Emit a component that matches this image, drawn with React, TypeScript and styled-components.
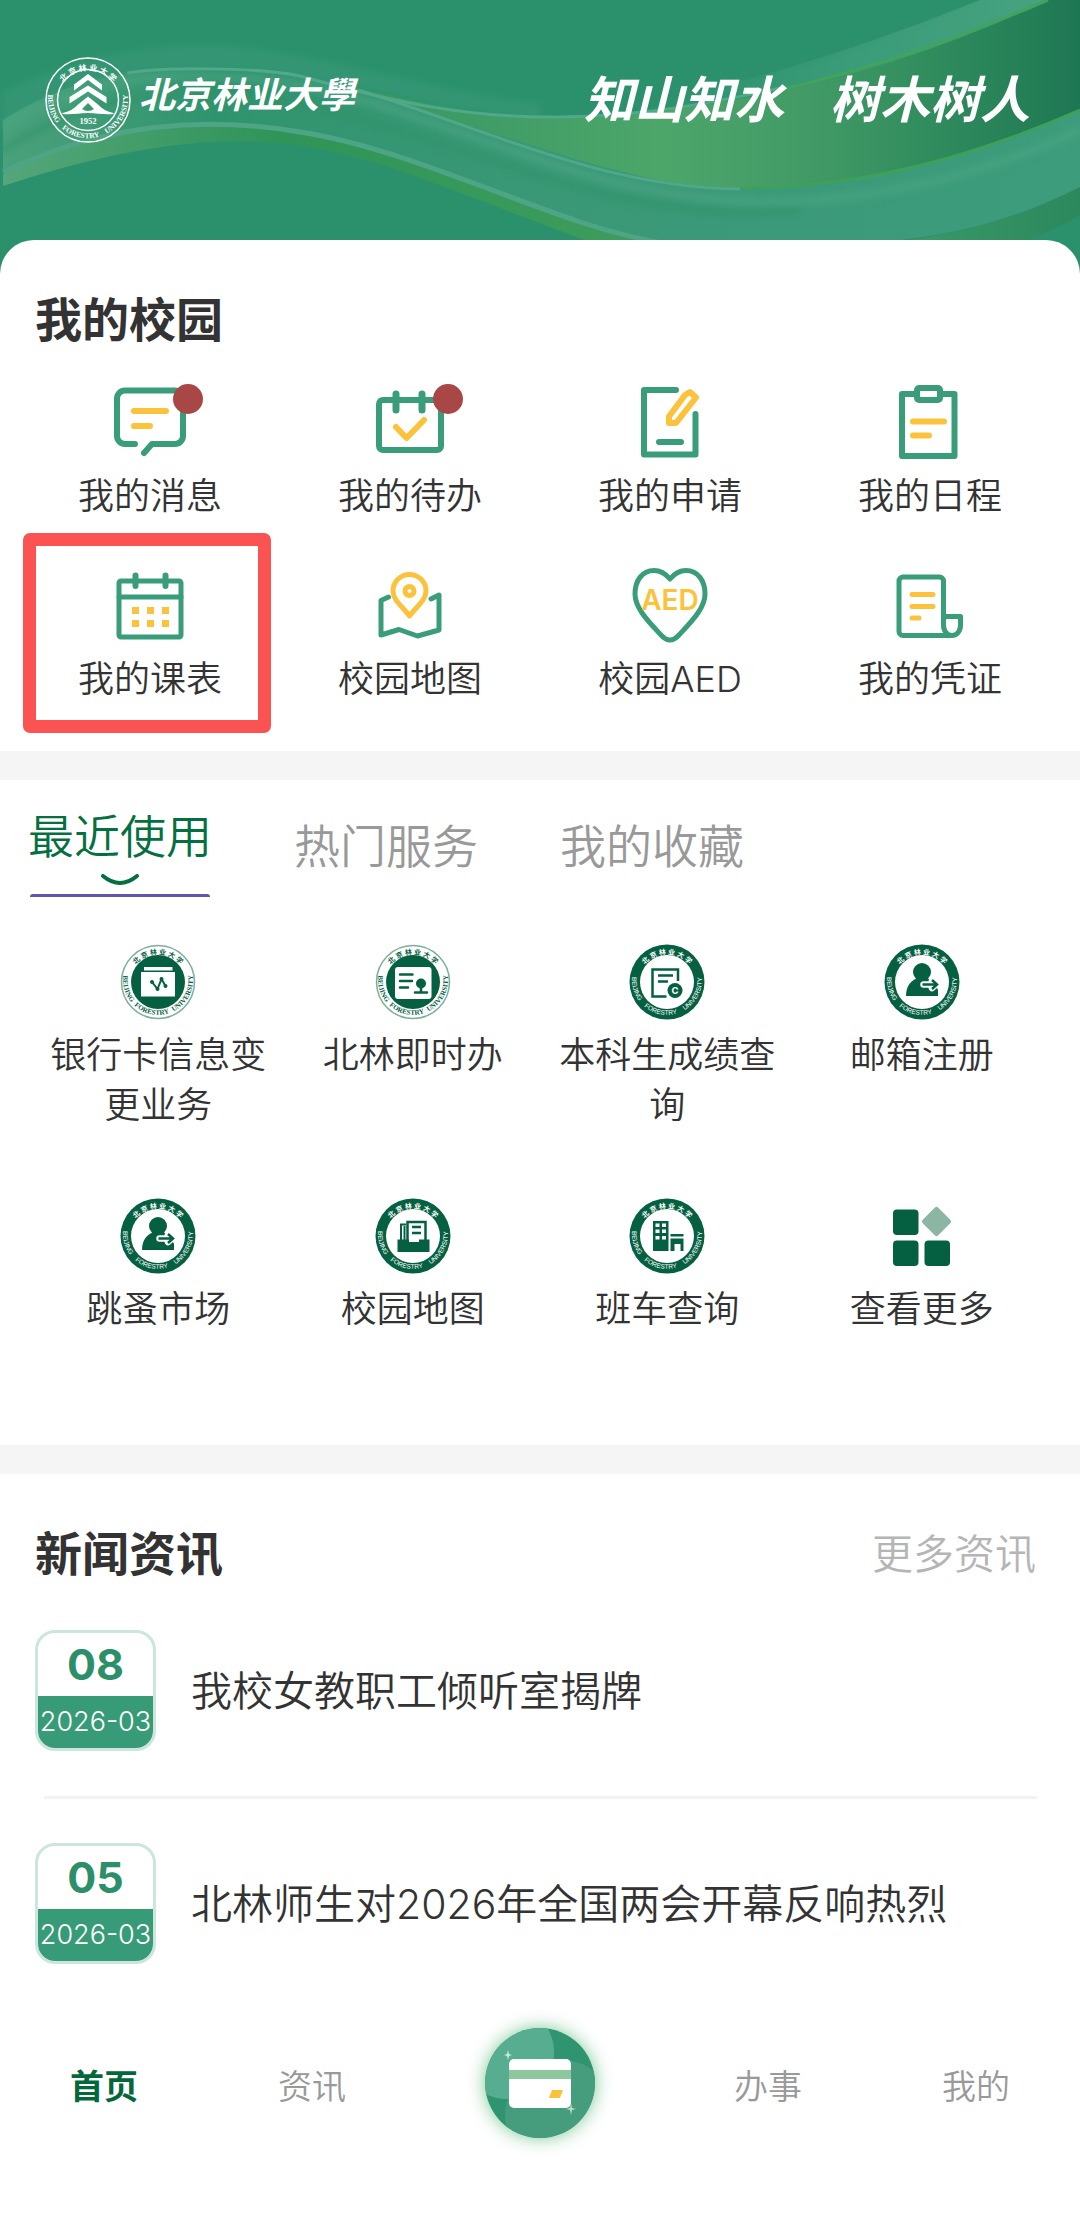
import React from "react";
import styled, { createGlobalStyle, css } from "styled-components";

const GREEN = "#3a9d7a";
const YELLOW = "#fdc23c";
const DEEP = "#056042";
const INK = "#333333";

const GlobalStyle = createGlobalStyle`
  *, *::before, *::after { box-sizing: border-box; }
  body {
    margin: 0;
    background: #ffffff;
    color: ${INK};
    font-family: Inter, "Noto Sans CJK SC", sans-serif;
    font-weight: 350;
  }
  h1, h2, p, ul { margin: 0; padding: 0; }
  ul { list-style: none; }
  a { color: inherit; text-decoration: none; }
  button { border: 0; padding: 0; background: none; color: inherit; font: inherit; cursor: pointer; }
  svg { display: block; }
`;

/* ---------- layout ---------- */

const Page = styled.div`
  display: flex;
  flex-direction: column;
`;

const Header = styled.header`
  position: relative;
  height: 276px;
  padding: 57px 50px 0 45px;
  background: #2b916d;
  overflow: hidden;
`;

const Waves = styled.svg`
  position: absolute;
  inset: 0;
  width: 100%;
  height: 100%;
`;

const HeaderRow = styled.div`
  position: relative;
  display: flex;
  align-items: center;
  justify-content: space-between;
  height: 86px;
  color: #ffffff;
`;

const Brand = styled.div`
  display: flex;
  align-items: center;
  gap: 8px;
`;

const BrandName = styled.h1`
  padding-bottom: 10px;
  font-size: 36px;
  line-height: 48px;
  font-weight: 700;
  font-style: italic;
`;

const Slogan = styled.p`
  display: flex;
  gap: 46px;
  font-size: 50px;
  line-height: 60px;
  font-weight: 700;
  font-style: italic;
`;

const Section = styled.section<{ $rounded?: boolean }>`
  background: #ffffff;
  ${(p) =>
    p.$rounded &&
    css`
      position: relative;
      margin-top: -36px;
      border-radius: 34px 34px 0 0;
    `}
`;

const Divider = styled.div`
  height: 29px;
  background: #f5f5f5;
`;

const SectionHead = styled.div`
  display: flex;
  align-items: center;
  justify-content: space-between;
  padding: 0 44px 0 35px;
`;

const SectionTitle = styled.h2`
  font-size: 47px;
  line-height: 60px;
  font-weight: 700;
`;

const MoreLink = styled.a`
  font-size: 41px;
  line-height: 60px;
  color: #b5b5b5;
`;

/* ---------- campus shortcuts ---------- */

const CampusSection = styled(Section)`
  padding: 50px 0 48px;
`;

const CampusGrid = styled.ul`
  display: grid;
  grid-template-columns: repeat(4, 1fr);
  row-gap: 43px;
  padding: 30px 20px 0;
`;

const CampusItem = styled.li<{ $marked?: boolean }>`
  position: relative;
  ${(p) =>
    p.$marked &&
    css`
      &::after {
        content: "";
        position: absolute;
        inset: -30px 9px -30px 3px;
        border: 13px solid #fb5252;
        border-radius: 7px;
        pointer-events: none;
      }
    `}
`;

const ShortcutLink = styled.a`
  display: flex;
  flex-direction: column;
  align-items: center;
  gap: 8px;
`;

const IconBox = styled.span`
  position: relative;
  display: block;
  width: 84px;
  height: 84px;
`;

const Dot = styled.span`
  position: absolute;
  left: 65px;
  top: 4px;
  width: 30px;
  height: 30px;
  border-radius: 50%;
  background: #a94646;
`;

const Label = styled.span`
  font-size: 36px;
  line-height: 48px;
  text-align: center;
`;

/* ---------- service tabs ---------- */

const ServiceSection = styled(Section)`
  padding: 28px 0 111px;
`;

const Tabs = styled.div`
  display: flex;
  align-items: flex-start;
  gap: 82px;
  height: 89px;
  padding: 0 28px;
`;

const Tab = styled.button<{ $active?: boolean }>`
  display: flex;
  flex-direction: column;
  align-items: center;
  padding-top: ${(p) => (p.$active ? 0 : 10)}px;
  font-size: 46px;
  line-height: 56px;
  color: ${(p) => (p.$active ? "#05703f" : "#999999")};
`;

const Smile = styled.svg`
  margin: 10px 0 8px;
`;

const Underline = styled.span`
  width: 180px;
  height: 3px;
  border-radius: 3px 3px 0 0;
  background: #6355ac;
`;

const ServiceGrid = styled.ul`
  display: grid;
  grid-template-columns: repeat(4, 1fr);
  row-gap: 68px;
  padding: 47px 31px 0;
`;

const ServiceLink = styled.a`
  display: flex;
  flex-direction: column;
  align-items: center;
  gap: 10px;
  padding: 0 16px;
`;

const ServiceLabel = styled(Label)`
  line-height: 50px;
`;

/* ---------- news ---------- */

const NewsSection = styled(Section)`
  padding: 50px 0 36px;
`;

const NewsList = styled.ul`
  padding: 46px 43px 0 35px;
`;

const NewsItem = styled.li`
  & + &::before {
    content: "";
    display: block;
    height: 3px;
    margin: 45px 0 44px 9px;
    background: #f2f2f2;
  }
`;

const NewsLink = styled.a`
  display: flex;
  align-items: center;
  gap: 35px;
`;

const DateCard = styled.time`
  flex: none;
  display: flex;
  flex-direction: column;
  width: 121px;
  height: 121px;
  border: 3px solid #cde6dd;
  border-radius: 20px;
  overflow: hidden;
  text-align: center;
`;

const Day = styled.span`
  height: 63px;
  font-size: 43px;
  line-height: 62px;
  font-weight: 700;
  color: #2b8f6a;
`;

const Month = styled.span`
  flex: 1;
  display: flex;
  justify-content: center;
  font-size: 27px;
  line-height: 52px;
  color: #ffffff;
  background: #389b78;
`;

const NewsTitle = styled.span`
  font-size: 41px;
  line-height: 60px;
`;

/* ---------- bottom bar ---------- */

const BottomBar = styled.nav`
  display: grid;
  grid-template-columns: 1fr 1fr 248px 1fr 1fr;
  align-items: center;
  justify-items: center;
  padding: 28px 0 76px;
  background: #ffffff;
`;

const BarLink = styled.a<{ $active?: boolean }>`
  padding-top: 8px;
  font-size: 34px;
  line-height: 48px;
  font-weight: ${(p) => (p.$active ? 700 : 350)};
  color: ${(p) => (p.$active ? "#05683c" : "#999999")};
`;

const CardButton = styled.button`
  width: 110px;
  height: 110px;
  border-radius: 50%;
  box-shadow: 0 0 18px rgba(90, 185, 120, 0.8);
`;

/* ---------- header art ---------- */

const HeaderWaves = () => (
  <Waves viewBox="0 0 1080 276" preserveAspectRatio="none" aria-hidden="true">
    <defs>
      <linearGradient id="leaf" x1="358" x2="1080" y1="0" y2="0" gradientUnits="userSpaceOnUse">
        <stop offset="0" stopColor="#379662" />
        <stop offset="0.42" stopColor="#4ca66a" />
        <stop offset="0.62" stopColor="#429b66" />
        <stop offset="0.85" stopColor="#2b875b" />
        <stop offset="1" stopColor="#1e7753" />
      </linearGradient>
      <linearGradient id="ribbon" x1="0" x2="1080" y1="0" y2="0" gradientUnits="userSpaceOnUse">
        <stop offset="0" stopColor="#4aa17c" />
        <stop offset="0.2" stopColor="#2f946e" />
        <stop offset="0.5" stopColor="#3a9877" />
        <stop offset="1" stopColor="#3d9c7c" />
      </linearGradient>
      <linearGradient id="upper" x1="640" x2="1080" y1="0" y2="0" gradientUnits="userSpaceOnUse">
        <stop offset="0" stopColor="#3f9f7c" stopOpacity="0" />
        <stop offset="0.5" stopColor="#3f9f7c" stopOpacity="0.8" />
        <stop offset="1" stopColor="#4aa381" />
      </linearGradient>
      <linearGradient id="strip" x1="0" x2="700" y1="0" y2="0" gradientUnits="userSpaceOnUse">
        <stop offset="0" stopColor="#55a67b" />
        <stop offset="0.4" stopColor="#2f9458" />
        <stop offset="1" stopColor="#409e5c" />
      </linearGradient>
      <linearGradient id="corner" x1="880" x2="1080" y1="0" y2="0" gradientUnits="userSpaceOnUse">
        <stop offset="0" stopColor="#3b9c6a" />
        <stop offset="1" stopColor="#2c885d" />
      </linearGradient>
      <filter id="soft" x="-5%" y="-20%" width="110%" height="140%">
        <feGaussianBlur stdDeviation="3" />
      </filter>
    </defs>
    <path d="M3 92C70 60 150 38 250 48C350 62 440 92 540 104V120C440 110 350 84 286 75C180 60 90 72 3 120Z" fill="#3a9a78" opacity="0.55" filter="url(#soft)" />
    <path d="M560 116C720 98 880 40 980 0H1048C930 58 800 92 690 108C640 116 590 118 540 118Z" fill="url(#upper)" />
    <path d="M600 110C760 80 880 36 965 0" stroke="#2d8f68" strokeWidth="5" fill="none" opacity="0.6" filter="url(#soft)" />
    <path d="M3 120C60 84 120 68 193 68C250 68 310 74 358 88C420 108 480 130 540 148C620 174 680 188 740 188C860 188 970 158 1080 110V187C1010 222 950 236 880 242H657C600 230 570 218 540 207C450 174 370 142 300 132C190 112 100 132 3 183Z" fill="url(#ribbon)" />
    <path d="M3 126C60 92 120 76 193 76C270 76 330 88 400 112L540 160C620 188 690 200 760 202C880 202 990 172 1080 130" stroke="#4ba583" strokeWidth="9" fill="none" opacity="0.6" filter="url(#soft)" />
    <path d="M3 150C60 112 130 92 210 92C300 96 400 130 540 176C640 208 720 218 800 210" stroke="#2d9266" strokeWidth="7" fill="none" opacity="0.55" filter="url(#soft)" />
    <path d="M358 88C410 100 480 118 560 117C760 112 920 60 1048 0H1080V110C970 158 860 188 740 188C680 188 620 174 540 148C480 130 420 108 358 88Z" fill="url(#leaf)" />
    <path d="M127 73C160 68 250 66 300 76C400 104 470 118 560 117C640 116 710 104 780 88" stroke="#4fa98a" strokeWidth="3" fill="none" />
    <path d="M780 90C880 66 960 38 1048 0" stroke="#41a35c" strokeWidth="3" fill="none" />
    <path d="M358 90C480 126 600 188 740 189" stroke="#50a888" strokeWidth="3" fill="none" />
    <path d="M740 188C860 188 970 158 1080 110" stroke="#3fa05a" strokeWidth="3" fill="none" />
    <path d="M3 175C90 132 190 112 300 132C370 142 450 174 540 207C580 222 610 232 657 242H590C520 216 440 184 380 164C290 136 190 124 3 186Z" fill="url(#strip)" />
    <path d="M3 172C90 130 190 113 300 132C390 146 480 188 580 222C610 232 640 240 680 246" stroke="#4da585" strokeWidth="5" fill="none" />
    <path d="M880 243C950 238 1020 218 1080 187V215C1050 232 1030 240 1000 250H880Z" fill="url(#corner)" />
  </Waves>
);

const BrandSeal = () => (
  <svg width="86" height="86" viewBox="0 0 172 172" aria-hidden="true">
    <defs>
      <path id="brand-top" d="M21 92A65 65 0 0 1 151 92" />
      <path id="brand-bottom" d="M7 70A80 80 0 1 0 165 70" />
    </defs>
    <circle cx="86" cy="86" r="84" fill="none" stroke="#fff" strokeWidth="3" />
    <circle cx="86" cy="86" r="61" fill="none" stroke="#fff" strokeWidth="3" />
    <text fontSize="16" fontWeight="700" fill="#fff" textAnchor="middle">
      <textPath href="#brand-top" startOffset="50%">北 京 林 业 大 学</textPath>
    </text>
    <g fontSize="15" fontWeight="600" fill="#fff" textAnchor="middle" fontFamily="Liberation Serif, serif">
      <text>
        <textPath href="#brand-bottom" startOffset="13%">BEIJING</textPath>
      </text>
      <text>
        <textPath href="#brand-bottom" startOffset="44%">FORESTRY</textPath>
      </text>
      <text>
        <textPath href="#brand-bottom" startOffset="81%">UNIVERSITY</textPath>
      </text>
    </g>
    <path d="M86 34L114 55V67L86 46L58 67V55Z" fill="#fff" />
    <path d="M86 57L123 80V93L86 69L49 93V80Z" fill="#fff" />
    <path fillRule="evenodd" d="M86 79L106 95C114 104 124 109 137 112V114C118 116 104 112 86 112S54 116 35 114V112C48 109 58 104 66 95ZM86 92L74 104Q86 112 98 104Z" fill="#fff" />
    <text x="86" y="134" fontSize="17" fontWeight="700" fill="#fff" textAnchor="middle" fontFamily="Liberation Serif, serif">1952</text>
  </svg>
);

/* ---------- campus icons ---------- */

const LineIcon = ({ children, w = 6 }: { children: React.ReactNode; w?: number }) => (
  <svg width="84" height="84" viewBox="0 0 84 84" fill="none" stroke={GREEN} strokeWidth={w} strokeLinecap="round" strokeLinejoin="round" aria-hidden="true">
    {children}
  </svg>
);

const MessageIcon = () => (
  <LineIcon>
    <path d="M27 64H17A8 8 0 0 1 9 56V18.500A8 8 0 0 1 17 10.500H67A8 8 0 0 1 75 18.500V56A8 8 0 0 1 67 64H44L36 73" />
    <path d="M26 31H58M26 46H42" stroke={YELLOW} />
  </LineIcon>
);

const TodoIcon = () => (
  <LineIcon>
    <rect x="11" y="20" width="62" height="50" rx="4" />
    <path d="M28 14V30M54 14V30" strokeWidth="7" />
    <path d="M28 47L38.500 58L56 40" stroke={YELLOW} />
  </LineIcon>
);

const ApplyIcon = () => (
  <LineIcon>
    <path d="M48 10H16V74.500H67.500V34M31 62H53" />
    <path d="M62 12L68 17.500L48 43H41V36.500L57 15Z" stroke={YELLOW} />
  </LineIcon>
);

const ScheduleIcon = () => (
  <LineIcon>
    <path d="M29 14H14V76H66.500V14H52" />
    <rect x="29" y="8" width="23" height="12" rx="2" />
    <path d="M25 41.500H56M25 55.500H41" stroke={YELLOW} />
  </LineIcon>
);

const TimetableIcon = () => (
  <LineIcon w={5}>
    <rect x="11" y="18" width="62" height="56" rx="2" />
    <path d="M11 34H73" />
    <path d="M27.500 12.500V23M57.500 12.500V23" strokeWidth="6" />
    <path d="M24 44h7v7h-7zM39 44h7v7h-7zM54 44h7v7h-7zM24 57h7v7h-7zM39 57h7v7h-7zM54 57h7v7h-7z" fill={YELLOW} stroke="none" />
  </LineIcon>
);

const MapIcon = () => (
  <LineIcon w={5}>
    <path d="M20.500 34L13 37.500V72L31 66.500L49.500 73L71 67V32L63 36" />
    <path d="M41.500 53C34 43 25 37 25 28A16.500 16.500 0 0 1 58 28C58 37 49 43 41.500 53Z" stroke={YELLOW} />
    <circle cx="41.500" cy="28" r="4.500" stroke={YELLOW} />
  </LineIcon>
);

const AedIcon = () => (
  <LineIcon w={5}>
    <path d="M42 16C37 10 31 7.500 26 7.500C14 7.500 7 18 7 31C7 45 20 58 33 72Q42 82 51 72C64 58 77 45 77 31C77 18 70 7.500 58 7.500C53 7.500 47 10 42 16Z" />
    <text x="42" y="47" fontSize="28" fontWeight="600" fill={YELLOW} stroke="none" textAnchor="middle">AED</text>
  </LineIcon>
);

const VoucherIcon = () => (
  <LineIcon w={5}>
    <path d="M64 72.500H15A4 4 0 0 1 11 68.500V18A4 4 0 0 1 15 14H51.500A4 4 0 0 1 55.500 18V62C55.500 68 59 72.500 64 72.500C69 72.500 72.500 68 72.500 62V53.500H55.500" />
    <path d="M24 31.500H45M24 43.500H45M24 55H31" stroke={YELLOW} />
  </LineIcon>
);

/* ---------- service seals ---------- */

const SealIcon = ({ id, light, children }: { id: string; light?: boolean; children: React.ReactNode }) => (
  <svg width="76" height="76" viewBox="0 0 152 152" aria-hidden="true">
    <defs>
      <path id={`${id}-top`} d="M17 80A59 59 0 0 1 135 80" />
      <path id={`${id}-bottom`} d="M7 60A70 70 0 1 0 145 60" />
    </defs>
    <circle cx="76" cy="76" r={light ? 73 : 75} fill={light ? "#fff" : DEEP} stroke={light ? "#7dae9b" : "none"} strokeWidth="3" />
    <circle cx="76" cy="76" r="54" fill={light ? DEEP : "#fff"} />
    <text fontSize="14" fontWeight="700" fill={light ? DEEP : "#fff"} textAnchor="middle">
      <textPath href={`#${id}-top`} startOffset="50%">北 京 林 业 大 学</textPath>
    </text>
    <g
      fontSize={light ? 14 : 13}
      fontWeight={light ? 600 : 400}
      fill={light ? DEEP : "#fff"}
      textAnchor="middle"
      fontFamily={light ? "Liberation Serif, serif" : "Liberation Sans, sans-serif"}
    >
      <text>
        <textPath href={`#${id}-bottom`} startOffset="13%">BEIJING</textPath>
      </text>
      <text>
        <textPath href={`#${id}-bottom`} startOffset="44%">FORESTRY</textPath>
      </text>
      <text>
        <textPath href={`#${id}-bottom`} startOffset="81%">UNIVERSITY</textPath>
      </text>
    </g>
    {children}
  </svg>
);

const BankIcon = () => (
  <SealIcon id="bank" light>
    <path d="M48 46H105V53H48ZM42 56H110V105H42Z" fill="#fff" />
    <path d="M64 76L75 90L83 70L91 84" fill="none" stroke={DEEP} strokeWidth="4" />
    <g fill={DEEP}>
      <circle cx="64" cy="76" r="4" />
      <circle cx="75" cy="90" r="4" />
      <circle cx="83" cy="70" r="4" />
      <circle cx="91" cy="84" r="4" />
    </g>
  </SealIcon>
);

const InstantIcon = () => (
  <SealIcon id="instant" light>
    <rect x="40" y="46" width="73" height="64" rx="6" fill="#fff" />
    <path d="M50 61H75M50 74H74M50 87H66M80 97H104M92 80V96" stroke={DEEP} strokeWidth="5" strokeLinecap="round" />
    <circle cx="92" cy="79" r="10" fill={DEEP} />
  </SealIcon>
);

const GradeIcon = () => (
  <SealIcon id="grade">
    <path d="M75 105H47V51H98V74M58 63H88M58 75H78" fill="none" stroke={DEEP} strokeWidth="5" />
    <circle cx="92" cy="93" r="15" fill={DEEP} />
    <text x="92" y="100" fontSize="19" fontWeight="700" fill="#fff" textAnchor="middle">C</text>
  </SealIcon>
);

const PersonIcon = ({ id }: { id: string }) => (
  <SealIcon id={id}>
    <circle cx="76" cy="56" r="18" fill={DEEP} />
    <path d="M44 104C44 86 52 74 66 69H88C96 74 104 82 108 92V104Z" fill={DEEP} />
    <path d="M79 81H104M96 74L104 81L96 88" fill="none" stroke="#fff" strokeWidth="13" strokeLinejoin="round" strokeLinecap="round" />
    <path d="M77 81H105M96 72L106 81L96 90" fill="none" stroke={DEEP} strokeWidth="5" />
    <path d="M84 96H108V104H84Z" fill={DEEP} />
  </SealIcon>
);

const ArchiveIcon = () => (
  <SealIcon id="archive">
    <path d="M52 84V53H62" fill="none" stroke={DEEP} strokeWidth="4" />
    <path d="M57 56H61V84H57Z" fill={DEEP} />
    <path d="M65 86V48H101V86" fill="none" stroke={DEEP} strokeWidth="5" />
    <path d="M74 58H92M74 70H92" stroke={DEEP} strokeWidth="5" />
    <path d="M45 83H68V88H88V83H109V108H45Z" fill={DEEP} />
  </SealIcon>
);

const BusIcon = () => (
  <SealIcon id="bus">
    <path d="M48 46H79V106H48ZM83 81H109V106H103V92H91V106H83ZM83 72H109V77H83Z" fill={DEEP} />
    <path d="M53 51h8v7h-8zM66 51h8v7h-8zM53 63h8v7h-8zM66 63h8v7h-8zM53 76h8v7h-8zM66 76h8v7h-8z" fill="#fff" />
  </SealIcon>
);

const MoreIcon = () => (
  <svg width="76" height="76" viewBox="0 0 152 152" aria-hidden="true">
    <rect x="18" y="23" width="51" height="51" rx="8" fill={DEEP} />
    <rect x="18" y="85" width="51" height="51" rx="8" fill={DEEP} />
    <rect x="81" y="85" width="51" height="51" rx="8" fill={DEEP} />
    <rect x="83" y="25" width="44" height="44" rx="5" fill="#8cb5a4" transform="rotate(45 105 47)" />
  </svg>
);

const CardIcon = () => (
  <svg width="110" height="110" viewBox="0 0 110 110" aria-hidden="true">
    <defs>
      <clipPath id="card-clip">
        <circle cx="55" cy="55" r="55" />
      </clipPath>
    </defs>
    <g clipPath="url(#card-clip)">
      <rect width="110" height="110" fill="#2f9570" />
      <circle cx="76" cy="88" r="56" fill="#459d7d" />
      <circle cx="22" cy="24" r="47" fill="#57ad90" />
    </g>
    <rect x="24" y="31" width="62" height="49" rx="5" fill="#fff" />
    <path d="M24 42H86V51H24Z" fill="#8dc79e" />
    <path d="M67 62H78L75 70H64Z" fill={YELLOW} />
    <path d="M23 22L24 26L27 27L24 28L23 32L22 28L19 27L22 26Z" fill="#cbe9dc" />
    <path d="M86 75L87 80L91 81L87 82L86 87L85 82L81 81L85 80Z" fill="#b9dccd" />
  </svg>
);

/* ---------- data ---------- */

const campus = [
  { label: "我的消息", icon: <MessageIcon />, dot: true },
  { label: "我的待办", icon: <TodoIcon />, dot: true },
  { label: "我的申请", icon: <ApplyIcon /> },
  { label: "我的日程", icon: <ScheduleIcon /> },
  { label: "我的课表", icon: <TimetableIcon />, marked: true },
  { label: "校园地图", icon: <MapIcon /> },
  { label: "校园AED", icon: <AedIcon /> },
  { label: "我的凭证", icon: <VoucherIcon /> },
];

const services = [
  { label: "银行卡信息变更业务", icon: <BankIcon /> },
  { label: "北林即时办", icon: <InstantIcon /> },
  { label: "本科生成绩查询", icon: <GradeIcon /> },
  { label: "邮箱注册", icon: <PersonIcon id="mail" /> },
  { label: "跳蚤市场", icon: <PersonIcon id="market" /> },
  { label: "校园地图", icon: <ArchiveIcon /> },
  { label: "班车查询", icon: <BusIcon /> },
  { label: "查看更多", icon: <MoreIcon /> },
];

const tabs = ["最近使用", "热门服务", "我的收藏"];

const news = [
  { day: "08", month: "2026-03", title: "我校女教职工倾听室揭牌" },
  { day: "05", month: "2026-03", title: "北林师生对2026年全国两会开幕反响热烈" },
];

export default function App() {
  const [tab, setTab] = React.useState(0);
  return (
    <Page lang="zh-CN">
      <GlobalStyle />
      <Header>
        <HeaderWaves />
        <HeaderRow>
          <Brand>
            <BrandSeal />
            <BrandName>北京林业大學</BrandName>
          </Brand>
          <Slogan>
            <span>知山知水</span>
            <span>树木树人</span>
          </Slogan>
        </HeaderRow>
      </Header>

      <CampusSection $rounded>
        <SectionHead>
          <SectionTitle>我的校园</SectionTitle>
        </SectionHead>
        <CampusGrid>
          {campus.map((c) => (
            <CampusItem key={c.label} $marked={c.marked}>
              <ShortcutLink href="#">
                <IconBox>
                  {c.icon}
                  {c.dot && <Dot />}
                </IconBox>
                <Label>{c.label}</Label>
              </ShortcutLink>
            </CampusItem>
          ))}
        </CampusGrid>
      </CampusSection>
      <Divider />

      <ServiceSection>
        <Tabs role="tablist">
          {tabs.map((t, i) => (
            <Tab key={t} type="button" role="tab" aria-selected={tab === i} $active={tab === i} onClick={() => setTab(i)}>
              {t}
              {tab === i && (
                <>
                  <Smile width="40" height="12" viewBox="0 0 40 12" aria-hidden="true">
                    <path d="M3 2Q20 16 37 2" fill="none" stroke="#05703f" strokeWidth="4" strokeLinecap="round" />
                  </Smile>
                  <Underline />
                </>
              )}
            </Tab>
          ))}
        </Tabs>
        <ServiceGrid>
          {services.map((s) => (
            <li key={s.label}>
              <ServiceLink href="#">
                {s.icon}
                <ServiceLabel>{s.label}</ServiceLabel>
              </ServiceLink>
            </li>
          ))}
        </ServiceGrid>
      </ServiceSection>
      <Divider />

      <NewsSection>
        <SectionHead>
          <SectionTitle>新闻资讯</SectionTitle>
          <MoreLink href="#">更多资讯</MoreLink>
        </SectionHead>
        <NewsList>
          {news.map((n) => (
            <NewsItem key={n.day}>
              <NewsLink href="#">
                <DateCard dateTime={`${n.month}-${n.day}`}>
                  <Day>{n.day}</Day>
                  <Month>{n.month}</Month>
                </DateCard>
                <NewsTitle>{n.title}</NewsTitle>
              </NewsLink>
            </NewsItem>
          ))}
        </NewsList>
      </NewsSection>

      <BottomBar>
        <BarLink href="#" $active>
          首页
        </BarLink>
        <BarLink href="#">资讯</BarLink>
        <CardButton type="button" aria-label="校园卡">
          <CardIcon />
        </CardButton>
        <BarLink href="#">办事</BarLink>
        <BarLink href="#">我的</BarLink>
      </BottomBar>
    </Page>
  );
}
